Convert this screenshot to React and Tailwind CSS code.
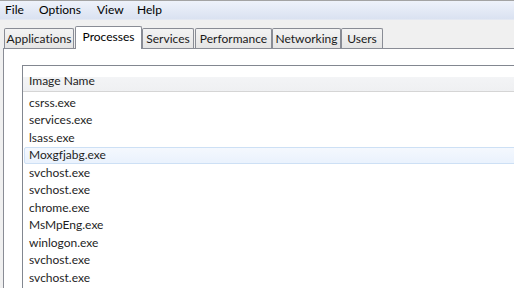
import React from 'react';

const tabs = [
  { label: 'Applications', w: 'w-[70px]', ml: 'ml-[4px]' },
  { label: 'Processes', w: 'w-[67px]', ml: 'ml-[1px]', active: true },
  { label: 'Services', w: 'w-[52px]', ml: 'ml-0' },
  { label: 'Performance', w: 'w-[77px]', ml: 'ml-[1px]' },
  { label: 'Networking', w: 'w-[69px]', ml: 'ml-0' },
  { label: 'Users', w: 'w-[42px]', ml: 'ml-0' },
];

const processes = [
  'csrss.exe',
  'services.exe',
  'lsass.exe',
  'Moxgfjabg.exe',
  'svchost.exe',
  'svchost.exe',
  'chrome.exe',
  'MsMpEng.exe',
  'winlogon.exe',
  'svchost.exe',
  'svchost.exe',
];

const App = () => {
  return (
    <div className="w-[514px] h-[288px] overflow-hidden flex flex-col bg-[#f0f0f0] text-[12px] text-black font-['Lato',sans-serif] [font-variant-ligatures:none]">
      {/* menu bar */}
      <div className="h-[20px] shrink-0 flex items-center pl-[5px] border-t border-[#a3a3a3] border-b border-b-[#e3e8f2] bg-gradient-to-b from-[#eef2fa] to-[#dae2f1]">
        <span className="w-[34px]">File</span>
        <span className="w-[58px]">Options</span>
        <span className="w-[40px]">View</span>
        <span>Help</span>
      </div>

      {/* tab strip */}
      <div className="h-[28px] shrink-0 flex items-end relative z-10">
        {tabs.map((t) =>
          t.active ? (
            <div
              key={t.label}
              className={`${t.w} ${t.ml} h-[23px] -mb-px flex items-center justify-center bg-white border border-b-0 border-[#898c95] rounded-t-[2px] pb-[3px]`}
            >
              {t.label}
            </div>
          ) : (
            <div
              key={t.label}
              className={`${t.w} ${t.ml} h-[20px] flex items-center justify-center border border-b-0 border-[#898c95] rounded-t-[2px] bg-gradient-to-b from-[#f3f3f3] to-[#e5e5e5] text-[#1a1a1a]`}
            >
              {t.label}
            </div>
          )
        )}
      </div>

      {/* tab panel */}
      <div className="flex-1 ml-[3px] bg-white border-l border-t border-[#898c95] pl-[18px] pt-[16px]">
        <div className="w-[520px] h-[300px] border-l border-t border-[#828790] bg-white">
          <div className="h-[26px] flex items-center pl-[6px] pt-[4px] border-b border-[#d5d5d5] bg-[linear-gradient(to_bottom,#ffffff_0px,#ffffff_11px,#f3f4f6_11px,#eff0f2_100%)] text-[#1e1e1e]">
            Image Name
          </div>
          <div className="pt-[2px]">
            {processes.map((p, i) => (
              <div
                key={i}
                className={
                  i === 3
                    ? 'h-[17.5px] ml-[1px] flex items-center pl-[4px] border border-[#cde0f5] rounded-[2px] bg-gradient-to-b from-[#f4f8fe] to-[#eaf2fd] text-[#1e1e1e]'
                    : 'h-[17.5px] ml-[1px] flex items-center pl-[4px] border border-transparent text-[#1e1e1e]'
                }
              >
                {p}
              </div>
            ))}
          </div>
        </div>
      </div>
    </div>
  );
};

export default App;
